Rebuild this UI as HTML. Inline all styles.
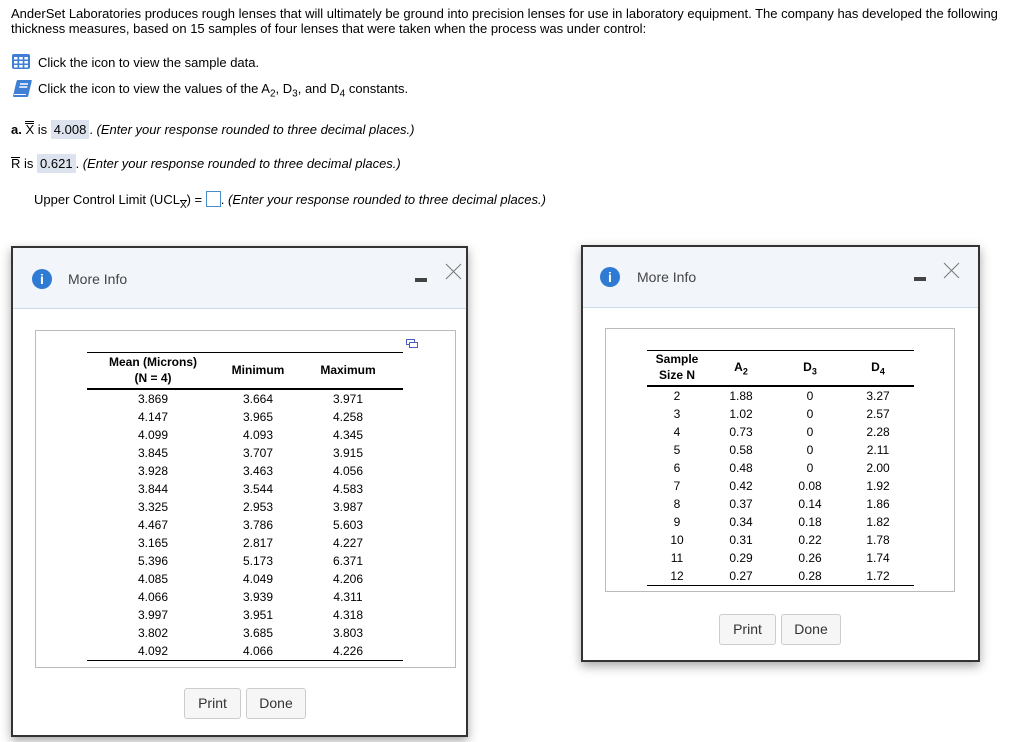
<!DOCTYPE html>
<html><head><meta charset="utf-8"><style>
body{margin:0;width:1014px;height:742px;background:#fff;font-family:"Liberation Sans",Arial,sans-serif;color:#000;position:relative;overflow:hidden}
.a{position:absolute;white-space:nowrap}
.t{font-size:13px}
.hl{background:#dde3ee;padding:2px 3px}
.dlg{position:absolute;background:#fff;border:2px solid #333;box-shadow:0 4px 10px rgba(0,0,0,.35)}
.hdr{position:absolute;left:0;right:0;top:0;height:60px;background:#f2f5fa;border-bottom:1px solid #c9dcec}
.info{position:absolute;width:20px;height:20px;border-radius:50%;background:#2f7bd3;color:#fff;font:bold 14px "Liberation Sans",sans-serif;text-align:center;line-height:20px}
.mi{position:absolute;font-size:14px;color:#444}
.box{position:absolute;border:1px solid #bbb;background:#fff}
.c{position:absolute;font-size:12px;text-align:center;transform:translateX(-50%);white-space:nowrap}
.b{font-weight:bold}
.btn{position:absolute;height:29px;border:1px solid #ccc;border-radius:3px;background:#f6f6f6;font-size:14px;color:#333;text-align:center;line-height:29px}
.ln{position:absolute;background:#000}
sub.s{font-size:10px}
.ob2{border-top:3px double #000;line-height:11px;display:inline-block}
.ob1{border-top:1px solid #000;line-height:11px;display:inline-block}
</style></head><body>
<div class="a t" style="left:11px;top:6px">AnderSet Laboratories produces rough lenses that will ultimately be ground into precision lenses for use in laboratory equipment. The company has developed the following</div>
<div class="a t" style="left:11px;top:21px">thickness measures, based on 15 samples of four lenses that were taken when the process was under control:</div>
<svg class="a" style="left:12px;top:54px" width="18" height="15"><rect width="18" height="15" rx="2" fill="#3f7fd6"/><g fill="#fff"><rect x="2" y="3" width="3.5" height="2.5"/><rect x="7.2" y="3" width="3.5" height="2.5"/><rect x="12.4" y="3" width="3.5" height="2.5"/><rect x="2" y="7" width="3.5" height="2.5"/><rect x="7.2" y="7" width="3.5" height="2.5"/><rect x="12.4" y="7" width="3.5" height="2.5"/><rect x="2" y="11" width="3.5" height="2.5"/><rect x="7.2" y="11" width="3.5" height="2.5"/><rect x="12.4" y="11" width="3.5" height="2.5"/></g></svg>
<div class="a t" style="left:38px;top:55px">Click the icon to view the sample data.</div>
<svg class="a" style="left:12px;top:79px" width="20" height="19"><path d="M6 1h13q1 0 .8 1l-3.6 15q-.3 1-1.2 1H2q-1.2 0-.9-1.2L4.5 2.2Q4.9 1 6 1z" fill="#3f7fd6"/><path d="M8 5h8M7.3 8h8" stroke="#fff" stroke-width="1.5"/><path d="M2 15.5h12" stroke="#fff" stroke-width="1"/></svg>
<div class="a t" style="left:38px;top:81px">Click the icon to view the values of the A<sub class="s">2</sub>, D<sub class="s">3</sub>, and D<sub class="s">4</sub> constants.</div>
<div class="a t" style="left:11px;top:121px"><b>a.</b> <span class="ob2">X</span> is <span class="hl">4.008</span>. <i>(Enter your response rounded to three decimal places.)</i></div>
<div class="a t" style="left:11px;top:156px"><span class="ob1">R</span> is <span class="hl">0.621</span>. <i>(Enter your response rounded to three decimal places.)</i></div>
<div class="a t" style="left:34px;top:191px">Upper Control Limit (UCL<sub class="s"><span class="ob1" style="line-height:9px">X</span></sub>) = <span style="display:inline-block;width:13px;height:14px;border:1px solid #4a8bc9;vertical-align:-3px"></span>. <i>(Enter your response rounded to three decimal places.)</i></div>

<div class="dlg" style="left:11px;top:246px;width:453px;height:487px">
<div class="hdr"></div>
<div class="info" style="left:19px;top:21px">i</div>
<div class="mi" style="left:55px;top:23px">More Info</div>
<div class="a" style="left:402px;top:30px;width:12px;height:4px;background:#444"></div>
<svg class="a" style="left:432px;top:15px" width="17" height="17"><path d="M1 1L16 16M16 1L1 16" stroke="#777" stroke-width="1"/></svg>
<div class="box" style="left:22px;top:82px;width:419px;height:336px"></div>
</div>
<svg class="a" style="left:406px;top:339px" width="12" height="10"><rect x="0.5" y="0.5" width="8" height="5" fill="none" stroke="#4a5fbf"/><rect x="3.5" y="3.5" width="8" height="5" fill="#fff" stroke="#4a5fbf"/></svg>
<div class="ln" style="left:87px;top:352px;width:316px;height:1px"></div>
<div class="c b" style="left:153px;top:355px">Mean (Microns)</div>
<div class="c b" style="left:153px;top:371px">(N = 4)</div>
<div class="c b" style="left:258px;top:363px">Minimum</div>
<div class="c b" style="left:348px;top:363px">Maximum</div>
<div class="ln" style="left:87px;top:388px;width:316px;height:2px"></div>
<div class="c" style="left:153px;top:390px;line-height:18px">3.869<br>4.147<br>4.099<br>3.845<br>3.928<br>3.844<br>3.325<br>4.467<br>3.165<br>5.396<br>4.085<br>4.066<br>3.997<br>3.802<br>4.092</div>
<div class="c" style="left:258px;top:390px;line-height:18px">3.664<br>3.965<br>4.093<br>3.707<br>3.463<br>3.544<br>2.953<br>3.786<br>2.817<br>5.173<br>4.049<br>3.939<br>3.951<br>3.685<br>4.066</div>
<div class="c" style="left:348px;top:390px;line-height:18px">3.971<br>4.258<br>4.345<br>3.915<br>4.056<br>4.583<br>3.987<br>5.603<br>4.227<br>6.371<br>4.206<br>4.311<br>4.318<br>3.803<br>4.226</div>
<div class="ln" style="left:87px;top:660px;width:316px;height:1px"></div>
<div class="btn" style="left:184px;top:688px;width:55px">Print</div>
<div class="btn" style="left:246px;top:688px;width:58px">Done</div>

<div class="dlg" style="left:581px;top:245px;width:395px;height:413px">
<div class="hdr"></div>
<div class="info" style="left:17px;top:20px">i</div>
<div class="mi" style="left:54px;top:22px">More Info</div>
<div class="a" style="left:331px;top:30px;width:12px;height:4px;background:#444"></div>
<svg class="a" style="left:360px;top:15px" width="17" height="17"><path d="M1 1L16 16M16 1L1 16" stroke="#777" stroke-width="1"/></svg>
<div class="box" style="left:22px;top:81px;width:348px;height:262px"></div>
</div>
<div class="ln" style="left:647px;top:350px;width:267px;height:1px"></div>
<div class="c b" style="left:677px;top:352px">Sample</div>
<div class="c b" style="left:677px;top:368px">Size N</div>
<div class="c b" style="left:741px;top:360px">A<sub style="font-size:9px">2</sub></div>
<div class="c b" style="left:810px;top:360px">D<sub style="font-size:9px">3</sub></div>
<div class="c b" style="left:878px;top:360px">D<sub style="font-size:9px">4</sub></div>
<div class="ln" style="left:647px;top:385px;width:267px;height:2px"></div>
<div class="c" style="left:677px;top:387px;line-height:18px">2<br>3<br>4<br>5<br>6<br>7<br>8<br>9<br>10<br>11<br>12</div>
<div class="c" style="left:741px;top:387px;line-height:18px">1.88<br>1.02<br>0.73<br>0.58<br>0.48<br>0.42<br>0.37<br>0.34<br>0.31<br>0.29<br>0.27</div>
<div class="c" style="left:810px;top:387px;line-height:18px">0<br>0<br>0<br>0<br>0<br>0.08<br>0.14<br>0.18<br>0.22<br>0.26<br>0.28</div>
<div class="c" style="left:878px;top:387px;line-height:18px">3.27<br>2.57<br>2.28<br>2.11<br>2.00<br>1.92<br>1.86<br>1.82<br>1.78<br>1.74<br>1.72</div>
<div class="ln" style="left:647px;top:585px;width:267px;height:1px"></div>
<div class="btn" style="left:719px;top:614px;width:55px">Print</div>
<div class="btn" style="left:781px;top:614px;width:58px">Done</div>
</body></html>
